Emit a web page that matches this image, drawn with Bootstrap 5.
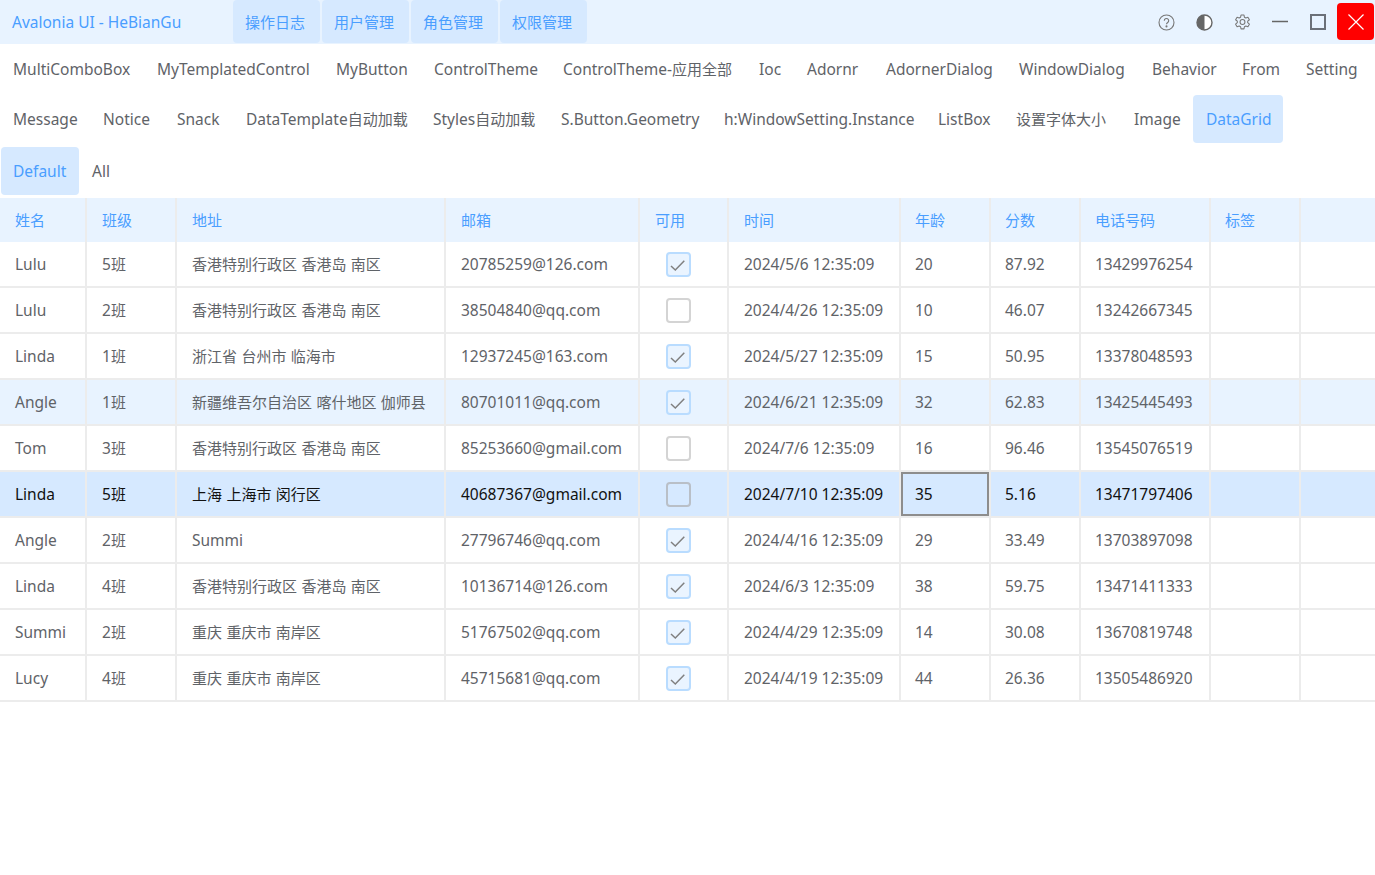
<!DOCTYPE html>
<html lang="zh">
<head>
<meta charset="utf-8">
<title>Avalonia UI - HeBianGu</title>
<link href="https://cdn.jsdelivr.net/npm/bootstrap@5.3.0/dist/css/bootstrap.min.css" rel="stylesheet">
<style>
html,body{height:100%;overflow:hidden}
body{font-family:"Noto Sans","Noto Sans CJK SC",sans-serif;font-size:15.5px;line-height:24px;color:#5f6368;background:#fff}
.zh{font-size:15px}
.titlebar{height:44px;background:#e8f3ff}
.apptitle{width:233px;padding-left:12px;color:#4a9eff}
.topbtn{width:87px;height:43px;margin-right:2px;padding-left:12px;background:#d6e9ff;color:#4a9eff;border-radius:4px;font-size:15px}
.winicons{margin-left:auto;height:44px}
.winbtn{width:38px;height:44px;color:#666}
.winclose{width:37px;height:37px;background:#f00;border-radius:4px;color:#fff;margin:3px 1px 0 0}
.tabline{height:50px}
.tabitem{flex:none;height:48px;padding:0 0 0 13px;white-space:nowrap;border-radius:4px}
.tabitem.on{background:#d6e9ff;color:#4a9eff}
.row-a .tabitem:nth-child(1){width:144px}
.row-a .tabitem:nth-child(2){width:179px}
.row-a .tabitem:nth-child(3){width:98px}
.row-a .tabitem:nth-child(4){width:129px}
.row-a .tabitem:nth-child(5){width:196px}
.row-a .tabitem:nth-child(6){width:48px}
.row-a .tabitem:nth-child(7){width:79px}
.row-a .tabitem:nth-child(8){width:133px}
.row-a .tabitem:nth-child(9){width:133px}
.row-a .tabitem:nth-child(10){width:90px}
.row-a .tabitem:nth-child(11){width:64px}
.row-b .tabitem:nth-child(1){width:90px}
.row-b .tabitem:nth-child(2){width:74px}
.row-b .tabitem:nth-child(3){width:69px}
.row-b .tabitem:nth-child(4){width:187px}
.row-b .tabitem:nth-child(5){width:128px}
.row-b .tabitem:nth-child(6){width:163px}
.row-b .tabitem:nth-child(7){width:214px}
.row-b .tabitem:nth-child(8){width:78px}
.row-b .tabitem:nth-child(9){width:118px}
.row-b .tabitem:nth-child(10){width:72px}
.row-b .tabitem:nth-child(11){width:90px}
.subline{height:54px;padding:3px 0 0 1px}
.subline .tabitem{height:48px;padding-left:12px;width:78px}
.subline .tabitem+.tabitem{padding-left:13px}
.grid{table-layout:fixed;width:1375px;margin:0;border-collapse:separate;border-spacing:0;color:#5f6368;--bs-table-bg:transparent;--bs-table-color:#5f6368}
.grid th{height:44px;background:#e8f3ff;color:#4a9eff;font-weight:400;font-size:15px;padding:0 0 0 15px;border-right:2px solid #ececec;border-bottom:0;white-space:nowrap;vertical-align:middle}
.grid td{height:46px;padding:0 0 0 15px;border-right:2px solid #ececec;border-bottom:2px solid #ececec;white-space:nowrap;vertical-align:middle;background:transparent;color:inherit;box-shadow:none}
.grid td.zh{word-spacing:.5px}
.grid th:nth-child(n+7),.grid td:nth-child(n+7){padding-left:14px}
.grid th:last-child,.grid td:last-child{border-right:0}
.grid tr.hov td{background:#e8f3ff}
.grid tr.sel td{background:#d6e9ff;color:#111}
.grid td.cur{box-shadow:inset 0 0 0 2px #8d8d8d}
.grid td.chk{padding-left:26px}
.cbx{width:25px;height:25px;border:2px solid #d4d4d4;border-radius:4px;background:#fff}
.cbx.yes{background:#eaf4ff;border-color:#b9dcff}
.sel .cbx{background:#d6e9ff;border-color:#b9bfc7}
.cbx svg{width:21px;height:21px;display:block}
.cbx path{fill:none;stroke:#808080;stroke-width:1.500}
</style>
</head>
<body>
<header class="titlebar d-flex align-items-start">
  <div class="apptitle d-flex align-items-center h-100">Avalonia UI - HeBianGu</div>
  <div class="topbtn d-flex align-items-center">操作日志</div>
  <div class="topbtn d-flex align-items-center">用户管理</div>
  <div class="topbtn d-flex align-items-center">角色管理</div>
  <div class="topbtn d-flex align-items-center">权限管理</div>
  <div class="winicons d-flex align-items-start">
    <div class="winbtn d-flex align-items-center justify-content-center">
      <svg width="17" height="17" viewBox="0 0 17 17" fill="none" stroke="#777" stroke-width="1.100"><circle cx="8.500" cy="8.500" r="7.500"/><path d="M6.300 6.700a2.200 2.200 0 1 1 3.400 1.800c-.8.500-1.200.9-1.200 1.800"/><circle cx="8.500" cy="12.400" r=".5" fill="#777"/></svg>
    </div>
    <div class="winbtn d-flex align-items-center justify-content-center">
      <svg width="17" height="17" viewBox="0 0 17 17"><circle cx="8.500" cy="8.500" r="7.500" fill="#fff" stroke="#666" stroke-width="1.400"/><path d="M8.500 1a7.500 7.500 0 0 0 0 15z" fill="#666"/></svg>
    </div>
    <div class="winbtn d-flex align-items-center justify-content-center">
      <svg width="17" height="17" viewBox="0 0 16 16" fill="none" stroke="#777" stroke-width="1"><path d="M6.600 1h2.800l.4 2 1.300.7 2-.7 1.400 2.400-1.600 1.400v1.400l1.600 1.400-1.400 2.400-2-.7-1.300.7-.4 2H6.600l-.4-2-1.300-.7-2 .7L1.500 9.600l1.600-1.400V6.800L1.500 5.400l1.400-2.400 2 .7 1.300-.7z" stroke-linejoin="round"/><circle cx="8" cy="7.500" r="2.300"/></svg>
    </div>
    <div class="winbtn d-flex align-items-center justify-content-center">
      <svg width="16" height="16" viewBox="0 0 16 16"><path d="M0 7.500h16" stroke="#666" stroke-width="1.500"/></svg>
    </div>
    <div class="winbtn d-flex align-items-center justify-content-center">
      <svg width="16" height="16" viewBox="0 0 16 16"><rect x="1" y="1" width="14" height="14" fill="none" stroke="#6b7078" stroke-width="2"/></svg>
    </div>
    <div class="winclose d-flex align-items-center justify-content-center">
      <svg width="16" height="16" viewBox="0 0 16 16"><path d="M.5.5l15 15M15.500.5l-15 15" stroke="#fff" stroke-width="1.200"/></svg>
    </div>
  </div>
</header>
<nav class="tabline row-a d-flex align-items-center">
  <div class="tabitem d-flex align-items-center">MultiComboBox</div>
  <div class="tabitem d-flex align-items-center">MyTemplatedControl</div>
  <div class="tabitem d-flex align-items-center">MyButton</div>
  <div class="tabitem d-flex align-items-center">ControlTheme</div>
  <div class="tabitem d-flex align-items-center"><span>ControlTheme-<span class="zh">应用全部</span></span></div>
  <div class="tabitem d-flex align-items-center">Ioc</div>
  <div class="tabitem d-flex align-items-center">Adornr</div>
  <div class="tabitem d-flex align-items-center">AdornerDialog</div>
  <div class="tabitem d-flex align-items-center">WindowDialog</div>
  <div class="tabitem d-flex align-items-center">Behavior</div>
  <div class="tabitem d-flex align-items-center">From</div>
  <div class="tabitem d-flex align-items-center">Setting</div>
</nav>
<nav class="tabline row-b d-flex align-items-center">
  <div class="tabitem d-flex align-items-center">Message</div>
  <div class="tabitem d-flex align-items-center">Notice</div>
  <div class="tabitem d-flex align-items-center">Snack</div>
  <div class="tabitem d-flex align-items-center"><span>DataTemplate<span class="zh">自动加载</span></span></div>
  <div class="tabitem d-flex align-items-center"><span>Styles<span class="zh">自动加载</span></span></div>
  <div class="tabitem d-flex align-items-center">S.Button.Geometry</div>
  <div class="tabitem d-flex align-items-center">h:WindowSetting.Instance</div>
  <div class="tabitem d-flex align-items-center">ListBox</div>
  <div class="tabitem d-flex align-items-center"><span class="zh">设置字体大小</span></div>
  <div class="tabitem d-flex align-items-center">Image</div>
  <div class="tabitem on d-flex align-items-center">DataGrid</div>
</nav>
<nav class="subline d-flex align-items-start">
  <div class="tabitem on d-flex align-items-center">Default</div>
  <div class="tabitem d-flex align-items-center">All</div>
</nav>
<table class="table grid">
  <colgroup>
    <col style="width:87px"><col style="width:90px"><col style="width:269px"><col style="width:194px"><col style="width:89px"><col style="width:172px"><col style="width:90px"><col style="width:90px"><col style="width:130px"><col style="width:90px"><col>
  </colgroup>
  <thead>
    <tr><th>姓名</th><th>班级</th><th>地址</th><th>邮箱</th><th>可用</th><th>时间</th><th>年龄</th><th>分数</th><th>电话号码</th><th>标签</th><th></th></tr>
  </thead>
  <tbody>
    <tr><td>Lulu</td><td>5<span class="zh">班</span></td><td class="zh">香港特别行政区 香港岛 南区</td><td>20785259@126.com</td><td class="chk"><div class="cbx yes"><svg viewBox="0 0 21 21"><path d="M3 12l4.300 4 9-9.300"/></svg></div></td><td>2024/5/6 12:35:09</td><td>20</td><td>87.92</td><td>13429976254</td><td></td><td></td></tr>
    <tr><td>Lulu</td><td>2<span class="zh">班</span></td><td class="zh">香港特别行政区 香港岛 南区</td><td>38504840@qq.com</td><td class="chk"><div class="cbx"></div></td><td>2024/4/26 12:35:09</td><td>10</td><td>46.07</td><td>13242667345</td><td></td><td></td></tr>
    <tr><td>Linda</td><td>1<span class="zh">班</span></td><td class="zh">浙江省 台州市 临海市</td><td>12937245@163.com</td><td class="chk"><div class="cbx yes"><svg viewBox="0 0 21 21"><path d="M3 12l4.300 4 9-9.300"/></svg></div></td><td>2024/5/27 12:35:09</td><td>15</td><td>50.95</td><td>13378048593</td><td></td><td></td></tr>
    <tr class="hov"><td>Angle</td><td>1<span class="zh">班</span></td><td class="zh">新疆维吾尔自治区 喀什地区 伽师县</td><td>80701011@qq.com</td><td class="chk"><div class="cbx yes"><svg viewBox="0 0 21 21"><path d="M3 12l4.300 4 9-9.300"/></svg></div></td><td>2024/6/21 12:35:09</td><td>32</td><td>62.83</td><td>13425445493</td><td></td><td></td></tr>
    <tr><td>Tom</td><td>3<span class="zh">班</span></td><td class="zh">香港特别行政区 香港岛 南区</td><td>85253660@gmail.com</td><td class="chk"><div class="cbx"></div></td><td>2024/7/6 12:35:09</td><td>16</td><td>96.46</td><td>13545076519</td><td></td><td></td></tr>
    <tr class="sel"><td>Linda</td><td>5<span class="zh">班</span></td><td class="zh">上海 上海市 闵行区</td><td>40687367@gmail.com</td><td class="chk"><div class="cbx"></div></td><td>2024/7/10 12:35:09</td><td class="cur">35</td><td>5.16</td><td>13471797406</td><td></td><td></td></tr>
    <tr><td>Angle</td><td>2<span class="zh">班</span></td><td>Summi</td><td>27796746@qq.com</td><td class="chk"><div class="cbx yes"><svg viewBox="0 0 21 21"><path d="M3 12l4.300 4 9-9.300"/></svg></div></td><td>2024/4/16 12:35:09</td><td>29</td><td>33.49</td><td>13703897098</td><td></td><td></td></tr>
    <tr><td>Linda</td><td>4<span class="zh">班</span></td><td class="zh">香港特别行政区 香港岛 南区</td><td>10136714@126.com</td><td class="chk"><div class="cbx yes"><svg viewBox="0 0 21 21"><path d="M3 12l4.300 4 9-9.300"/></svg></div></td><td>2024/6/3 12:35:09</td><td>38</td><td>59.75</td><td>13471411333</td><td></td><td></td></tr>
    <tr><td>Summi</td><td>2<span class="zh">班</span></td><td class="zh">重庆 重庆市 南岸区</td><td>51767502@qq.com</td><td class="chk"><div class="cbx yes"><svg viewBox="0 0 21 21"><path d="M3 12l4.300 4 9-9.300"/></svg></div></td><td>2024/4/29 12:35:09</td><td>14</td><td>30.08</td><td>13670819748</td><td></td><td></td></tr>
    <tr><td>Lucy</td><td>4<span class="zh">班</span></td><td class="zh">重庆 重庆市 南岸区</td><td>45715681@qq.com</td><td class="chk"><div class="cbx yes"><svg viewBox="0 0 21 21"><path d="M3 12l4.300 4 9-9.300"/></svg></div></td><td>2024/4/19 12:35:09</td><td>44</td><td>26.36</td><td>13505486920</td><td></td><td></td></tr>
  </tbody>
</table>
<script src="https://cdn.jsdelivr.net/npm/bootstrap@5.3.0/dist/js/bootstrap.bundle.min.js"></script>
</body>
</html>
